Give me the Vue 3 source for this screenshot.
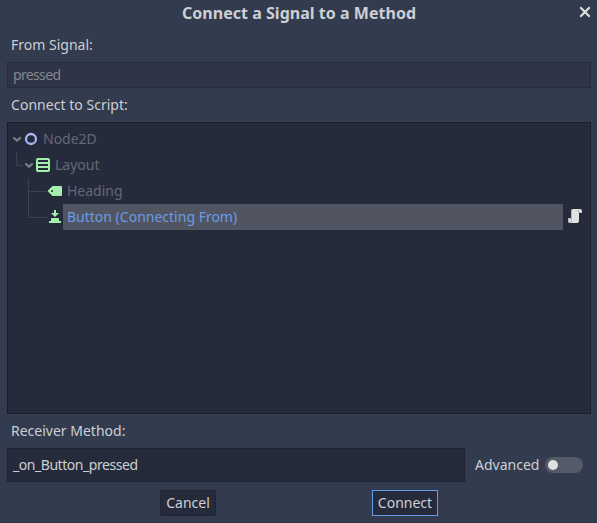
<script setup>
import { ref } from 'vue'

const signal = 'pressed'
const method = ref('_on_Button_pressed')
</script>

<template>
  <div class="dialog">
    <header class="title">
      <span class="title-text">Connect a Signal to a Method</span>
      <svg class="close" width="12" height="12" viewBox="0 0 12 12">
        <path d="M1.3 1.3 10.7 10.7M10.7 1.3 1.3 10.7" stroke="#e0e0e0" stroke-width="2.2" fill="none" />
      </svg>
    </header>

    <div class="label"><span>From Signal:</span></div>
    <div class="field readonly"><span class="t-signal">{{ signal }}</span></div>
    <div class="label"><span class="t-script">Connect to Script:</span></div>

    <div class="tree">
      <div class="row">
        <svg width="32" height="26" viewBox="0 0 32 26">
          <path class="arrow" d="M6 12 9 14.700 12 12" />
          <circle cx="23" cy="13" r="5" fill="none" stroke="#a5b7f3" stroke-width="2.3" />
        </svg>
        <span class="name">Node2D</span>
      </div>
      <div class="row">
        <svg width="44" height="26" viewBox="0 0 44 26">
          <path class="guide" d="M8.500 0V13.500H15" />
          <path class="arrow" d="M18 12 21 14.700 24 12" />
          <path fill="#a5efac" fill-rule="evenodd" d="M30 6H40A2 2 0 0 1 42 8V18A2 2 0 0 1 40 20H30A2 2 0 0 1 28 18V8A2 2 0 0 1 30 6ZM30 8V10H40V8ZM30 12V14H40V12ZM30 16V18H40V16Z" />
        </svg>
        <span class="name">Layout</span>
      </div>
      <div class="row">
        <svg width="55" height="26" viewBox="0 0 55 26">
          <path class="guide" d="M20.500 0V26M20.500 13.500H39" />
          <path fill="#a5efac" fill-rule="evenodd" d="M44.500 8H53A1 1 0 0 1 54 9V17A1 1 0 0 1 53 18H44.500L40 13.600V12.400ZM44 12A1 1 0 0 0 44 14A1 1 0 0 0 44 12Z" />
        </svg>
        <span class="name t-heading">Heading</span>
      </div>
      <div class="row">
        <svg width="55" height="26" viewBox="0 0 55 26">
          <path class="guide" d="M20.500 0V13.500H39" />
          <path fill="#a5efac" d="M46 6H48V9H51L47 13 43 9H46ZM44 14H50A1 1 0 0 1 51 15V17H43V15A1 1 0 0 1 44 14ZM41 17H53V19H41Z" />
        </svg>
        <span class="name selected">Button (Connecting From)</span>
        <svg class="script" width="14" height="14" viewBox="0 0 14 14">
          <path fill="#e0e0e0" d="M5 0H12A2 2 0 0 1 14 2V4H11V12A2 2 0 0 1 9 14H2A2 2 0 0 1 0 12V9H3V2A2 2 0 0 1 5 0Z" />
          <path fill="none" stroke="#b4b6ba" d="M5 .5A1.500 1.500 0 0 0 3.500 2V12A1.500 1.500 0 0 1 .5 12V9.500H3M10.500 1V3.500H13.500" />
        </svg>
      </div>
    </div>

    <div class="label"><span>Receiver Method:</span></div>
    <div class="method-row">
      <div class="field method"><span class="t-method">{{ method }}</span></div>
      <span class="advanced">Advanced</span>
      <span class="toggle"><span class="knob"></span></span>
    </div>
    <footer class="actions">
      <button class="btn cancel">Cancel</button>
      <button class="btn connect">Connect</button>
    </footer>
  </div>
</template>

<style>
body {
  background: #333b4f;
}
</style>

<style scoped>
.dialog {
  box-sizing: border-box;
  width: 597px;
  height: 523px;
  padding: 0 6px 0 7px;
  background: #333b4f;
  color: #cdcfd3;
  font: 14px/20px "Noto Sans", sans-serif;
  white-space: nowrap;
  border-bottom: 1px solid #2f374a;
}
.title {
  height: 28px;
  display: flex;
  align-items: center;
  padding-left: 175px;
  font-size: 16px;
  line-height: 26px;
  font-weight: 700;
}
.title-text {
  width: 397px;
  margin-top: -2px;
  letter-spacing: 0.03px;
}
.close {
  flex: none;
  margin-top: -4px;
}
.label {
  height: 34px;
  line-height: 34px;
  padding-left: 4px;
}
.field {
  box-sizing: border-box;
  height: 26px;
  padding-left: 5px;
  border: 1px solid #202531;
  background: #262b3b;
  line-height: 24px;
}
.readonly {
  border-color: #272d3c;
  background: #2f3446;
  color: #84878f;
}
.t-signal {
  letter-spacing: -0.65px;
}
.t-method {
  letter-spacing: -0.45px;
}
.t-script {
  letter-spacing: 0.03px;
}
.tree {
  box-sizing: border-box;
  height: 292px;
  padding: 3px 0 0;
  border: 1px solid #191e29;
  background: #262b3b;
}
.row {
  display: flex;
  height: 26px;
  color: #656873;
}
.row svg {
  flex: none;
}
.name {
  box-sizing: border-box;
  padding-left: 3px;
  line-height: 26px;
}
.selected {
  width: 500px;
  padding-left: 4px;
  background: #515561;
  color: #699ce8;
}
.t-heading {
  padding-left: 4px;
}
.script {
  margin: 5px 0 0 5px;
}
.guide {
  fill: none;
  stroke: #3d424f;
}
.arrow {
  fill: none;
  stroke: #7c7f88;
  stroke-width: 2.2;
  stroke-linecap: round;
  stroke-linejoin: round;
}
.method-row {
  display: flex;
  align-items: center;
}
.method {
  width: 458px;
  height: 34px;
  line-height: 32px;
}
.advanced {
  width: 70px;
  padding-left: 10px;
}
.toggle {
  display: flex;
  align-items: center;
  box-sizing: border-box;
  width: 38px;
  height: 16px;
  padding-left: 3px;
  border-radius: 8px;
  background: #555a69;
}
.knob {
  width: 10px;
  height: 10px;
  border-radius: 50%;
  background: #e0e0e0;
}
.actions {
  display: flex;
  justify-content: space-between;
  padding: 8px 153px 0 153px;
}
.btn {
  box-sizing: border-box;
  height: 26px;
  padding: 0;
  border: 1px solid #202531;
  background: #262b3b;
  color: #cdcfd3;
  font: inherit;
  line-height: 24px;
}
.cancel {
  width: 56px;
}
.connect {
  width: 66px;
  border-color: #699ce8;
}
</style>
